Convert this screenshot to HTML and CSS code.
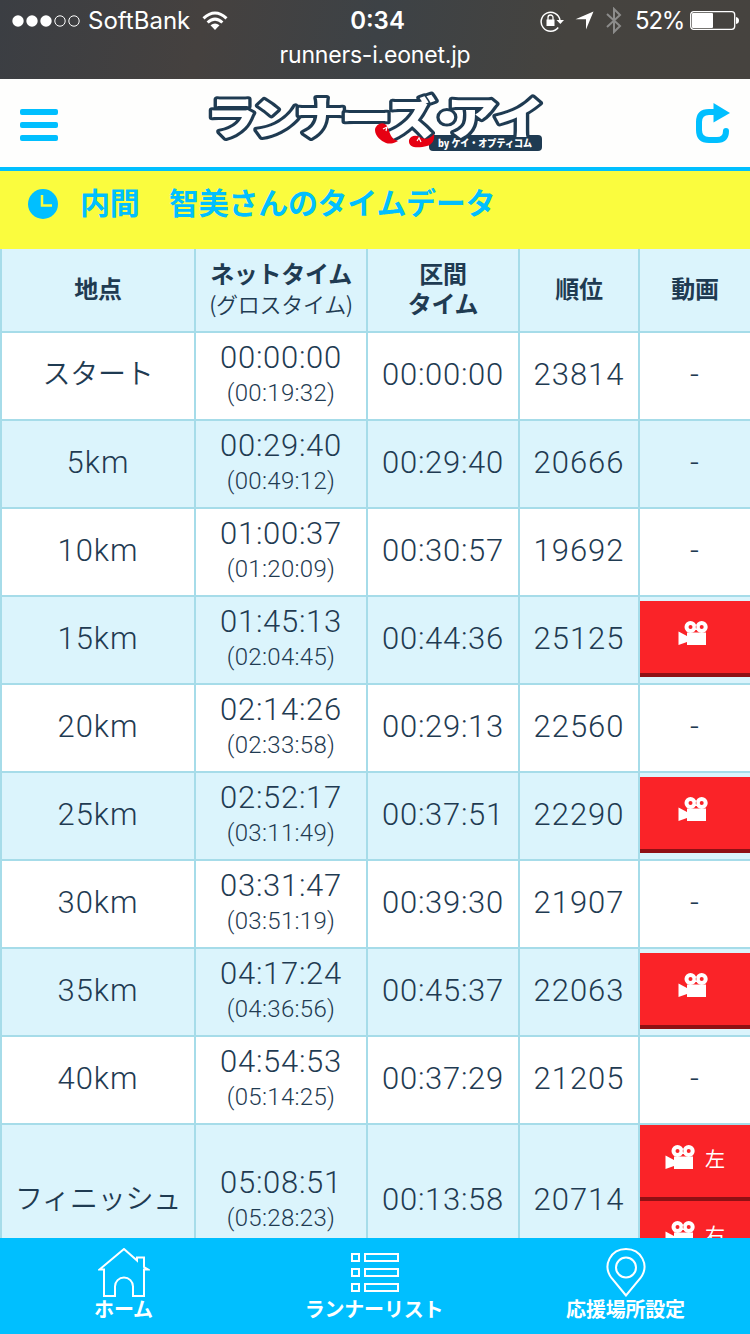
FILE: index.html
```
<!DOCTYPE html>
<html lang="ja">
<head>
    <meta charset="UTF-8">
    <meta name="viewport" content="width=device-width, initial-scale=1.0">
    <title>ランナーズ・アイ</title>
    <link rel="stylesheet" href="styles.css">
</head>
<body>
    <svg width="0" height="0" class="defs">
        <symbol id="camera" viewBox="0 0 30 26">
            <path fill="#fff" fill-rule="evenodd" d="M12.500 1a6 6 0 1 1 0 12a6 6 0 1 1 0-12zM12.500 5a2 2 0 1 0 0 4a2 2 0 1 0 0-4zM23.700 1a6 6 0 1 1 0 12a6 6 0 1 1 0-12zM23.700 5a2 2 0 1 0 0 4a2 2 0 1 0 0-4z"/>
            <path fill="#fff" d="M9 12.500h19V25H9v-3L.500 25V11.500L9 16z"/>
        </symbol>
    </svg>

    <div class="browser-bar">
        <div class="status">
            <div class="status-left">
                <svg width="68" height="14" viewBox="0 0 68 14">
                    <g fill="#fff"><circle cx="6" cy="7" r="5.7"/><circle cx="20" cy="7" r="5.7"/><circle cx="34" cy="7" r="5.7"/></g>
                    <g fill="none" stroke="#fff"><circle cx="48" cy="7" r="5.2"/><circle cx="62" cy="7" r="5.2"/></g>
                </svg>
                <span class="carrier">SoftBank</span>
                <svg width="26" height="20" viewBox="0 0 26 20">
                    <g fill="none" stroke="#fff" stroke-width="3">
                        <path d="M1.5 7.3Q13-3.3 24.500 7.300"/>
                        <path d="M5.600 11.500Q13 4.700 20.400 11.500"/>
                    </g>
                    <path fill="#fff" d="M8.500 14.300Q13 10.500 17.500 14.300L13 19z"/>
                </svg>
            </div>
            <div class="clock">0:34</div>
            <div class="status-right">
                <svg class="lock" width="24" height="22" viewBox="0 0 24 22">
                    <path d="M18.200 17.500A9.500 9.500 0 1 1 20 10" fill="none" stroke="#fff" stroke-width="1.500"/>
                    <path d="M16.500 10H24l-3.700 4z" fill="#fff"/>
                    <path d="M6.500 9.500h8V16h-8z" fill="#fff"/>
                    <path d="M8 10V7.500a2.500 2.500 0 0 1 5 0V10" fill="none" stroke="#fff" stroke-width="1.300"/>
                </svg>
                <svg class="location" width="19" height="19" viewBox="0 0 19 19"><path fill="#fff" d="M18.500.500L11 18.500V8.300H.500z"/></svg>
                <svg class="bluetooth" width="16" height="27" viewBox="0 0 16 27"><path fill="none" stroke="#8c8c8b" stroke-width="2" d="M1 7l13 12-6 6V2l6 6L1 20"/></svg>
                <span class="percent">52%</span>
                <svg width="49" height="19" viewBox="0 0 49 19">
                    <rect x=".7" y=".7" width="44" height="17.600" rx="3" fill="none" stroke="#fff" stroke-width="1.300"/>
                    <rect x="2" y="2" width="21" height="15" rx="1" fill="#fff"/>
                    <path fill="#fff" d="M46 6q3 .5 3 3.500t-3 3.500z"/>
                </svg>
            </div>
        </div>
        <div class="url">runners-i.eonet.jp</div>
    </div>

    <header class="site-header">
        <div class="menu"><span></span><span></span><span></span></div>
        <svg class="logo" width="340" height="62" viewBox="0 0 340 62">
            <rect x="222" y="43" width="113" height="16" rx="4" fill="#1f3b52"/>
            <text class="logo-text" transform="scale(1.14 1)" x="-1 39 77 117 156 188 210 251" y="43">ランナーズ・アイ</text>
            <path class="shoe" d="M168 38c0-5 8-10 12-4 3 6 3 13 11 15 0 0-6 4-12 2-5-2-11-7-11-13z"/>
            <path class="shoe" d="M202 48c2-5 7-5 11-3 5 3 10 2 14-3 1 6-2 11-7 12-8 2-19 3-18-6z"/>
            <path d="M176 37l4-2-1 4m31 10l2-3 2 4" fill="none" stroke="#fff" stroke-width="1.200"/>
            <text class="logo-by" x="231" y="55" textLength="94" lengthAdjust="spacingAndGlyphs">by ケイ・オプティコム</text>
        </svg>
        <svg class="reload" width="36" height="41" viewBox="0 0 36 41">
            <path d="M19 9h-5Q4 9 4 19v8q0 10 10 10h8q9 0 9-9" fill="none" stroke="#00bfff" stroke-width="6" stroke-linecap="round"/>
            <path d="M18.500 0L35 10L18.500 19.500z" fill="#00bfff"/>
        </svg>
    </header>

    <h1 class="title">
        <svg width="30" height="30" viewBox="0 0 30 30">
            <circle cx="15" cy="15" r="15" fill="#00bfff"/>
            <path d="M14 6v10.500h10" fill="none" stroke="#fafc3e" stroke-width="2.500"/>
        </svg>
        <span>内間　智美さんのタイムデータ</span>
    </h1>

    <table class="times">
        <colgroup><col class="c1"><col class="c2"><col class="c3"><col class="c4"><col class="c5"></colgroup>
        <thead>
            <tr><th>地点</th><th>ネットタイム<small>(グロスタイム)</small></th><th>区間<br>タイム</th><th>順位</th><th>動画</th></tr>
        </thead>
        <tbody>
            <tr><td class="kana">スタート</td><td class="time">00:00:00<small>(00:19:32)</small></td><td class="time">00:00:00</td><td>23814</td><td>-</td></tr>
            <tr><td>5km</td><td class="time">00:29:40<small>(00:49:12)</small></td><td class="time">00:29:40</td><td>20666</td><td>-</td></tr>
            <tr><td>10km</td><td class="time">01:00:37<small>(01:20:09)</small></td><td class="time">00:30:57</td><td>19692</td><td>-</td></tr>
            <tr><td>15km</td><td class="time">01:45:13<small>(02:04:45)</small></td><td class="time">00:44:36</td><td>25125</td><td class="movie"><a><svg><use href="#camera"/></svg></a></td></tr>
            <tr><td>20km</td><td class="time">02:14:26<small>(02:33:58)</small></td><td class="time">00:29:13</td><td>22560</td><td>-</td></tr>
            <tr><td>25km</td><td class="time">02:52:17<small>(03:11:49)</small></td><td class="time">00:37:51</td><td>22290</td><td class="movie"><a><svg><use href="#camera"/></svg></a></td></tr>
            <tr><td>30km</td><td class="time">03:31:47<small>(03:51:19)</small></td><td class="time">00:39:30</td><td>21907</td><td>-</td></tr>
            <tr><td>35km</td><td class="time">04:17:24<small>(04:36:56)</small></td><td class="time">00:45:37</td><td>22063</td><td class="movie"><a><svg><use href="#camera"/></svg></a></td></tr>
            <tr><td>40km</td><td class="time">04:54:53<small>(05:14:25)</small></td><td class="time">00:37:29</td><td>21205</td><td>-</td></tr>
            <tr class="finish"><td class="kana">フィニッシュ</td><td class="time">05:08:51<small>(05:28:23)</small></td><td class="time">00:13:58</td><td>20714</td><td class="movie"><a><svg><use href="#camera"/></svg><span>左</span></a><a><svg><use href="#camera"/></svg><span>右</span></a></td></tr>
        </tbody>
    </table>

    <nav class="tabs">
        <a class="home">
            <svg width="52" height="49" viewBox="0 0 52 49"><path d="M6 48V21.500H1.500L26 1l13 11.500V9.500h7V19l4 2.500H46V48H35V38.500a9 9 0 0 0-18 0V48z"/></svg>
            ホーム
        </a>
        <a class="list">
            <svg width="48" height="40" viewBox="0 0 48 40"><path d="M1 2h7v7H1zM14 2h33v7H14zM1 17h7v7H1zM14 17h33v7H14zM1 32h7v7H1zM14 32h33v7H14z"/></svg>
            ランナーリスト
        </a>
        <a class="place">
            <svg width="40" height="49" viewBox="0 0 40 49"><path d="M20 47.500L5.500 30C-4 17 5 1 20 1s24 16 14.500 29z"/><circle cx="20" cy="19.500" r="10"/></svg>
            応援場所設定
        </a>
    </nav>
</body>
</html>
```
FILE: styles.css
```
* {
    box-sizing: border-box;
}
body {
    margin: 0;
    height: 1334px;
    overflow: hidden;
    background: #fff;
    color: #1f3b52;
    font-family: "Noto Sans CJK JP", sans-serif;
}
svg {
    display: block;
    flex: none;
}
.defs {
    position: absolute;
}

/* status bar and address */
.browser-bar {
    height: 79px;
    color: #fff;
    font-family: Inter, sans-serif;
    background: linear-gradient(100deg, #3b3e43 0%, #45413f 27%, #3d4246 50%, #45433f 75%, #46433f 100%);
}
.status {
    display: grid;
    grid-template-columns: 1fr 60px 1fr;
    align-items: center;
    height: 41px;
    font-size: 24px;
}
.status-left {
    display: flex;
    align-items: center;
    padding-left: 12px;
}
.carrier {
    margin: 0 12px 0 8px;
}
.clock {
    padding-left: 5px;
    text-align: center;
    font-weight: 600;
    font-size: 24px;
}
.status-right {
    display: flex;
    align-items: center;
    justify-content: flex-end;
    padding-right: 11px;
}
.location {
    margin: 0 12px 0 11px;
}
.percent {
    margin: 0 6px 0 13px;
    letter-spacing: -1.3px;
}
.url {
    text-align: center;
    font-size: 23px;
    line-height: 28px;
    letter-spacing: -0.2px;
}

/* site header */
.site-header {
    display: flex;
    align-items: center;
    justify-content: space-between;
    height: 92px;
    padding: 0 19px 0 20px;
    background: #fefefd;
    border-bottom: 4px solid #00bfff;
}
.menu {
    display: flex;
    flex-direction: column;
    gap: 7px;
    margin-top: 3px;
}
.menu span {
    width: 38px;
    height: 6px;
    border-radius: 2px;
    background: #00bfff;
}
.logo {
    margin-left: 1px;
    overflow: visible;
}
.logo-text {
    font-size: 45px;
    font-weight: 900;
    fill: #fff;
    stroke: #1f3b52;
    stroke-width: 6px;
    stroke-linejoin: round;
    paint-order: stroke;
}
.logo-by {
    font-size: 10px;
    font-weight: 900;
    fill: #fff;
}
.shoe {
    fill: #e60012;
}

.title {
    display: flex;
    align-items: flex-start;
    gap: 22px;
    height: 78px;
    margin: 0;
    padding: 18px 28px;
    background: #fafc3e;
    color: #00bfff;
    font-size: 30px;
    line-height: 25px;
    font-weight: 700;
    letter-spacing: -0.3px;
}

/* time table */
.times {
    width: 750px;
    table-layout: fixed;
    border-collapse: separate;
    border-spacing: 0;
}
.c1 { width: 194px; }
.c2 { width: 172px; }
.c3 { width: 152px; }
.c4 { width: 120px; }
.c5 { width: 112px; }
th, td {
    padding: 0;
    text-align: center;
    vertical-align: middle;
    white-space: nowrap;
    border-left: 2px solid #a6dce9;
    border-bottom: 2px solid #a6dce9;
}
th {
    height: 84px;
    padding-bottom: 4px;
    background: #dbf4fc;
    font-size: 24px;
    line-height: 30px;
    font-weight: 700;
    letter-spacing: -0.3px;
}
th small {
    display: block;
    font-size: 22px;
    font-weight: 350;
}
td {
    height: 88px;
    padding-bottom: 3px;
    font-family: Roboto, "Noto Sans CJK JP", sans-serif;
    font-size: 31px;
    line-height: 36px;
    font-weight: 300;
    letter-spacing: 1px;
}
td small {
    display: block;
    font-size: 24px;
    line-height: 34px;
    letter-spacing: 0.3px;
}
.time {
    letter-spacing: 0.7px;
}
.kana {
    font-size: 28px;
    font-weight: 350;
    letter-spacing: -0.2px;
}
tbody tr:nth-child(even) {
    background: #dbf4fc;
}
.movie {
    padding-bottom: 2px;
}
.finish .movie {
    padding: 0;
}
.movie a {
    display: flex;
    align-items: center;
    justify-content: center;
    gap: 10px;
    height: 76px;
    padding: 0 4px 8px 0;
    background: #fa2328;
    border-bottom: 4px solid #8f1014;
    color: #fff;
    font-size: 20px;
    font-weight: 400;
    letter-spacing: 0;
}
.finish .movie a {
    padding-right: 0;
}
.movie span {
    padding-top: 5px;
}
.movie svg {
    width: 30px;
    height: 26px;
}

/* bottom tabs */
.tabs {
    position: fixed;
    left: 0;
    right: 0;
    bottom: 0;
    display: grid;
    grid-template-columns: 247px 254px 249px;
    height: 96px;
    background: #00bfff;
    color: #fff;
    font-size: 20px;
    line-height: 24px;
    font-weight: 700;
    letter-spacing: -0.2px;
}
.tabs a {
    display: flex;
    flex-direction: column;
    align-items: center;
    justify-content: flex-end;
    padding-bottom: 13px;
}
.tabs svg {
    fill: none;
    stroke: #fff;
    stroke-width: 2;
}
.list svg {
    margin: 0 0 5px 2px;
}
```
